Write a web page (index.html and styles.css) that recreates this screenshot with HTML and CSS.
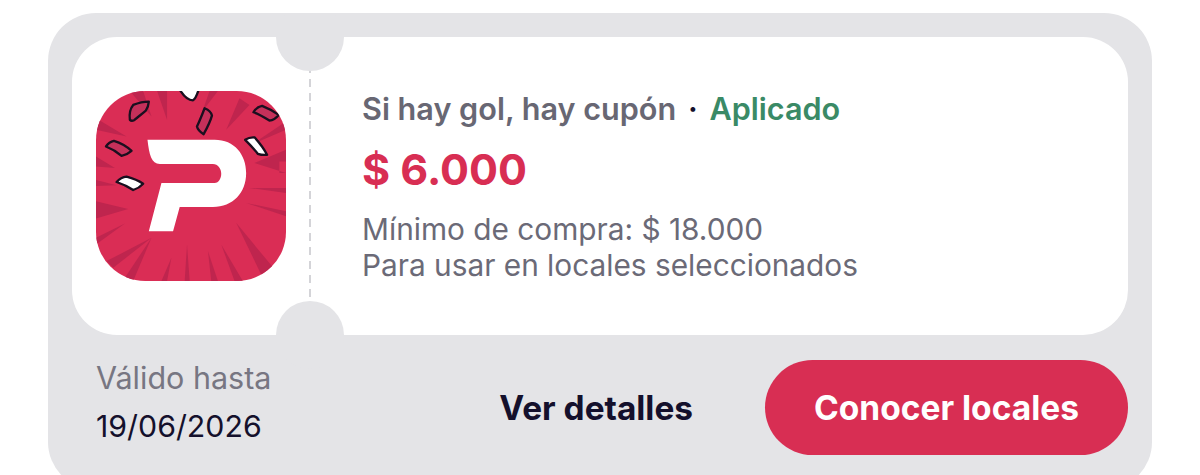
FILE: index.html
```html
<!DOCTYPE html>
<html lang="es">

<head>
  <meta charset="UTF-8">
  <title>Cupón</title>
  <link rel="stylesheet" href="styles.css">
</head>

<body>

  <div class="coupon">
    <div class="ticket">
      <!-- app icon, coords are 3x the screenshot -->
      <svg class="app-icon" viewBox="48 48 572 572" aria-hidden="true">
        <defs>
          <clipPath id="squircle">
            <rect x="48" y="48" width="572" height="572" rx="148" />
          </clipPath>
        </defs>
        <g clip-path="url(#squircle)">
          <rect x="48" y="48" width="572" height="572" fill="#da2d55" />
          <g fill="#bf254e">
            <polygon points="215,125 150,48 190,48" />
            <polygon points="262,135 232,48 262,48" />
            <polygon points="368,110 390,48 415,48" />
            <polygon points="440,165 480,70 510,90" />
            <polygon points="140,185 48,130 48,165" />
            <polygon points="105,280 48,245 48,275" />
            <polygon points="110,332 48,316 48,334" />
            <polygon points="145,403 48,380 48,432" />
            <polygon points="135,447 48,490 48,510" />
            <polygon points="215,490 80,560 100,580" />
            <polygon points="215,490 135,610 160,620" />
            <polygon points="275,550 245,620 262,620" />
            <polygon points="322,510 315,620 330,620" />
            <polygon points="385,530 395,620 415,620" />
            <polygon points="425,510 465,620 490,620" />
            <polygon points="470,445 550,610 590,590" />
            <polygon points="500,385 620,425 620,410" />
            <polygon points="510,340 620,355 620,340" />
            <polygon points="525,265 620,225 620,260 600,260 600,295 620,295" />
            <polygon points="515,210 620,140 620,165" />
          </g>
          <path fill="#fff" d="M203 195H405C465 195 500 240 500 295C500 355 460 397 400 397H300L280 470H207L245 325H405C418 325 425 310 425 297C425 282 415 268 400 268H240C215 268 208 240 203 195Z" />
          <g stroke="#1a0f1f" stroke-width="7" stroke-linejoin="round">
            <path fill="#fff" d="M300 44C310 60 322 76 340 76C348 72 352 60 357 44Z" />
            <path fill="#c5305a" d="M160 90C175 84 192 80 207 80C206 92 203 100 198 107C185 118 172 128 163 136C158 138 153 138 150 135C148 120 150 102 160 90Z" />
            <path fill="#c5305a" d="M375 100C385 104 395 112 397 122C392 140 382 160 372 178C362 172 354 164 352 155C360 138 368 118 375 100Z" />
            <path fill="#c5305a" d="M522 112C528 102 537 95 548 93C566 100 584 110 598 120C590 130 580 136 570 137C556 128 540 118 522 112Z" />
            <path fill="#c5305a" d="M78 215C84 206 92 200 102 198C122 204 142 216 155 228C146 236 136 241 125 243C112 232 96 222 78 215Z" />
            <path fill="#fff" d="M497 195C506 189 516 187 526 188C540 204 554 222 563 240C554 241 544 240 535 237C524 222 510 208 497 195Z" />
            <path fill="#fff" d="M110 322C118 313 128 307 140 306C158 311 176 318 190 327C182 336 172 342 160 346C145 336 128 328 110 322Z" />
          </g>
        </g>
      </svg>
      <div class="divider"></div>
      <div class="info">
        <p class="title">Si hay gol, hay cupón <span class="dot">·</span> <span class="status">Aplicado</span></p>
        <p class="amount">$ 6.000</p>
        <p class="terms">Mínimo de compra: $ 18.000<br>Para usar en locales seleccionados</p>
      </div>
    </div>

    <div class="coupon-footer">
      <div class="validity">
        <span class="validity-label">Válido hasta</span>
        <span class="validity-date">19/06/2026</span>
      </div>
      <a class="details-link">Ver detalles</a>
      <button class="btn-locales">Conocer locales</button>
    </div>
  </div>

</body>

</html>
```

FILE: styles.css
```css
html,
body {
  margin: 0;
  height: 100%;
  overflow: hidden;
  background-color: #fff;
}

body {
  font-family: Inter, "Liberation Sans", sans-serif;
  padding-top: 13px;
  box-sizing: border-box;
}

p {
  margin: 0;
}

.coupon {
  margin: 0 48px;
  height: 477px;
  box-sizing: border-box;
  padding: 24px;
  background-color: #e4e4e7;
  border-radius: 48px;
  overflow: hidden;
}

.ticket {
  display: flex;
  align-items: center;
  height: 298px;
  padding-left: 24px;
  background-color: #fff;
  border-radius: 45px;
}

.app-icon {
  width: 190px;
  height: 190px;
  flex-shrink: 0;
}

.divider {
  position: relative;
  align-self: stretch;
  width: 2px;
  margin: 0 51px 0 23px;
  background-image: repeating-linear-gradient(to bottom, #d4d4d8 0, #d4d4d8 8px, transparent 8px, transparent 14px);
}

.divider::before,
.divider::after {
  content: "";
  position: absolute;
  left: -33px;
  width: 68px;
  height: 68px;
  border-radius: 50%;
  background-color: #e4e4e7;
}

.divider::before {
  top: -34px;
}

.divider::after {
  bottom: -34px;
}

.info {
  display: flex;
  flex-direction: column;
  padding-top: 2px;
}

.title {
  font-size: 30.6px;
  line-height: 34px;
  font-weight: 600;
  color: #686773;
  white-space: nowrap;
}

.dot {
  color: #14102c;
  margin: 0 4px;
}

.status {
  color: #3a8a66;
}

.amount {
  margin-top: 18px;
  font-size: 43px;
  line-height: 50px;
  font-weight: 700;
  color: #d82e53;
}

.terms {
  margin-top: 17px;
  font-size: 29.8px;
  line-height: 36px;
  color: #6b6a77;
  white-space: nowrap;
}

.coupon-footer {
  display: flex;
  align-items: center;
  margin-top: 25px;
  padding-left: 24px;
}

.validity {
  display: flex;
  flex-direction: column;
  align-self: flex-start;
  gap: 12px;
  margin-right: auto;
}

.validity-label {
  font-size: 30.5px;
  line-height: 36px;
  color: #777682;
}

.validity-date {
  font-size: 30.3px;
  line-height: 36px;
  color: #14102c;
}

.details-link {
  margin-right: 72px;
  font-size: 33.4px;
  font-weight: 700;
  color: #14102c;
}

.btn-locales {
  width: 363px;
  height: 95px;
  border: 0;
  border-radius: 48px;
  background-color: #d82e53;
  color: #fff;
  font-family: inherit;
  font-size: 33.5px;
  font-weight: 700;
}
```
